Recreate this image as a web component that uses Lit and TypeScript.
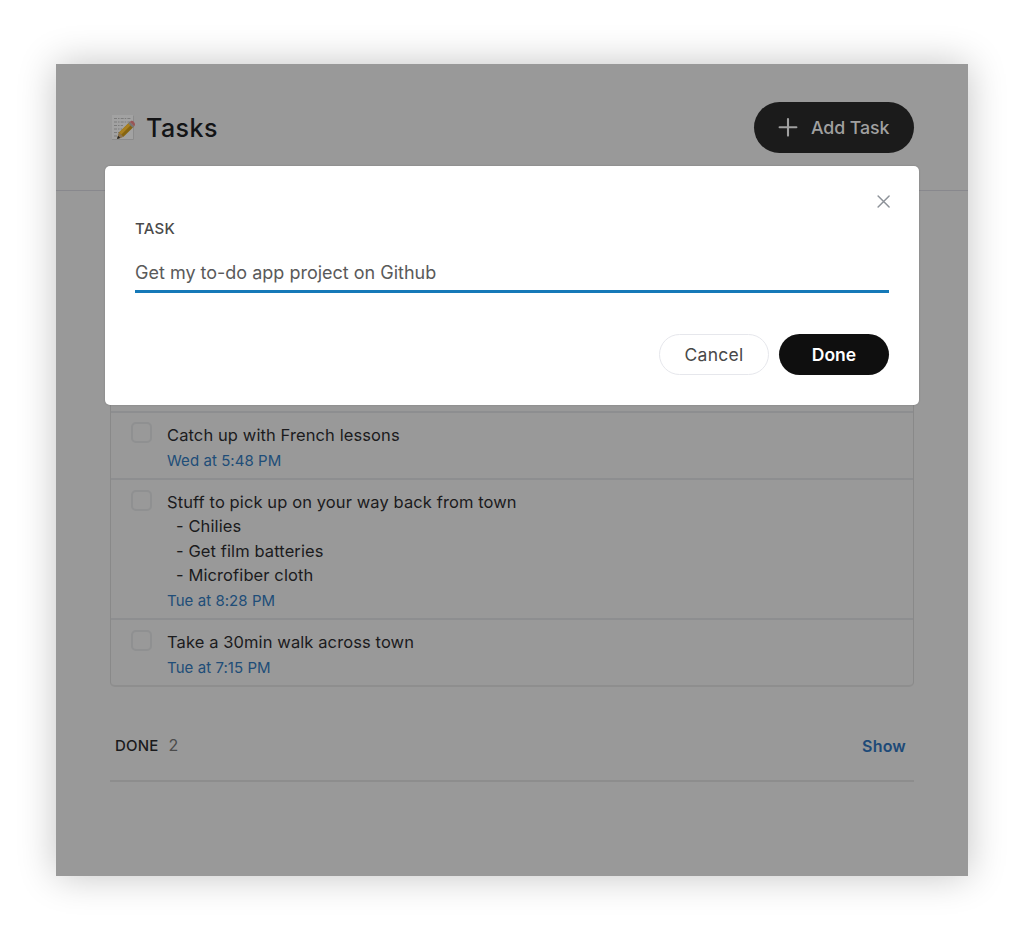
import { LitElement, html, css, svg } from "lit";
import { customElement } from "lit/decorators.js";

interface Task {
  lines: string[];
  time: string;
}

const TASKS: Task[] = [
  { lines: ["Catch up with French lessons"], time: "Wed at 5:48 PM" },
  {
    lines: [
      "Stuff to pick up on your way back from town",
      "- Chilies",
      "- Get film batteries",
      "- Microfiber cloth",
    ],
    time: "Tue at 8:28 PM",
  },
  { lines: ["Take a 30min walk across town"], time: "Tue at 7:15 PM" },
];

const memoIcon = html`<svg class="memo" width="26" height="28" viewBox="0 0 26 28">
  <rect x="2" y="2" width="22" height="25" fill="#a2a2a2" />
  <path d="M23.5 2.5V26.5H2" fill="none" stroke="#8b8b8b" />
  ${[5.5, 9, 12.5, 16, 19.5, 23].map(
    (y, i) => svg`<path d=${`M4 ${y}H${i < 2 ? 21 : 15 - i}`} stroke="#7c7c7c" stroke-width="1.2" stroke-dasharray="3 1 1.5 1.2" />`
  )}
  <path d="M7.2 25.8 9 19.6 19.5 9.2 24 13.4 13.5 23.8Z" fill="#86640f" />
  <path d="M9 19.6 19.5 9.2 21.7 11.3 11.2 21.7Z" fill="#a98020" />
  <path d="M7.2 25.8 9 19.6 13.5 23.8Z" fill="#8d7450" />
  <path d="M7 26 8.1 22.8 10.4 24.9Z" fill="#252525" />
  <path d="M18.2 10.5 19.8 9 24.2 13.2 22.7 14.7Z" fill="#777" />
  <path d="M19.8 9 21.3 7.8Q22.5 7.2 24 8.9 25.4 10.6 25 12L24.2 13.2Z" fill="#985556" />
</svg>`;

@customElement("app-root")
export class AppRoot extends LitElement {
  static styles = css`
    :host {
      display: block;
      box-sizing: border-box;
      width: 1024px;
      height: 940px;
      padding: 64px 56px;
      background: #fff;
      font-family: Inter, sans-serif;
      overflow: hidden;
    }
    * { box-sizing: border-box; }
    button { font: inherit; margin: 0; padding: 0; border: 0; background: none; }
    svg { display: block; flex: none; }
    .window {
      position: relative;
      height: 812px;
      background: #999;
      box-shadow: 0 0 36px rgba(0, 0, 0, 0.24);
    }
    .header {
      display: flex;
      align-items: center;
      justify-content: space-between;
      height: 127px;
      padding: 0 54px;
      border-bottom: 1px solid #88888d;
    }
    .title { display: flex; align-items: center; gap: 10px; }
    .heading { margin: 0; padding-top: 1px; font-size: 25px; line-height: 32px; font-weight: 500; letter-spacing: 0.45px; color: #131416; }
    .add {
      display: flex;
      align-items: center;
      gap: 13px;
      width: 160px;
      height: 51px;
      padding-left: 24px;
      border-radius: 26px;
      background: #1b1b1b;
      color: #a0a0a0;
      font-size: 17.8px;
      font-weight: 550;
      letter-spacing: -0.1px;
    }
    .add-text { padding-top: 1px; }
    .content { padding: 199px 54px 0; }
    .list { padding-top: 20px; border: 1px solid #898989; border-bottom: 2px solid #8e8e8e; border-radius: 5px; }
    .task { display: flex; gap: 15px; padding: 9.9px 20px 6.3px; border-top: 2px solid #8d8e90; }
    .check { width: 21px; height: 21px; margin-top: -0.5px; border: 2px solid #8f9091; border-radius: 5px; }
    .line { font-size: 16.5px; line-height: 24.2px; letter-spacing: 0.1px; color: #1b1b1d; white-space: pre; }
    .sub { padding-left: 9px; }
    .time { margin-top: 1.9px; font-size: 15px; line-height: 23px; letter-spacing: 0.06px; color: #204d78; }
    .done {
      display: flex;
      align-items: center;
      height: 71px;
      margin-top: 23.3px;
      padding: 0 8px 0 5px;
      border-bottom: 2px solid #8d8d8d;
    }
    .done-label { font-size: 15px; font-weight: 500; letter-spacing: 0.2px; color: #1a1a1c; }
    .count { margin-left: 10px; font-size: 16px; color: #4b4b4b; }
    .show { margin-left: auto; padding-top: 2px; font-size: 16px; font-weight: 600; letter-spacing: 0.2px; color: #1d4a78; }
    .modal {
      position: absolute;
      left: 49px;
      top: 102px;
      width: 814px;
      height: 239px;
      padding: 28px 30px;
      border-radius: 5px;
      background: #fff;
      box-shadow: 0 0 2px rgba(0, 0, 0, 0.2);
    }
    .close { display: flex; justify-content: flex-end; height: 15px; }
    .label { display: block; margin-top: 10px; font-size: 15px; line-height: 20px; font-weight: 500; letter-spacing: 0.25px; color: #4a4a4a; }
    .field { margin-top: 17px; height: 37px; border-bottom: 3px solid #1579b8; font-size: 18px; line-height: 34px; color: #5a5a5a; white-space: pre; }
    .actions { display: flex; justify-content: flex-end; gap: 10px; margin-top: 41px; }
    .action { width: 110px; height: 41px; border-radius: 21px; font-size: 17.5px; }
    .cancel { border: 1.5px solid #e6e7ec; letter-spacing: 0.25px; color: #484848; }
    .confirm { background: #0f0f0f; color: #fff; font-weight: 600; }
  `;

  render() {
    return html`
      <div class="window">
        <header class="header">
          <div class="title">${memoIcon}<h1 class="heading">Tasks</h1></div>
          <button class="add">
            <svg width="20" height="20" viewBox="0 0 20 20" fill="none" stroke="#a0a0a0" stroke-width="2.1" stroke-linecap="round">
              <path d="M10 2V18.6M1.6 10.3H18.4" />
            </svg>
            <span class="add-text">Add Task</span>
          </button>
        </header>
        <main class="content">
          <div class="list">
            ${TASKS.map(
              (t) => html`<div class="task">
                <span class="check"></span>
                <div class="body">
                  ${t.lines.map((l, i) => html`<div class="line ${i ? "sub" : ""}">${l}</div>`)}
                  <div class="time">${t.time}</div>
                </div>
              </div>`
            )}
          </div>
          <div class="done">
            <span class="done-label">DONE</span><span class="count">2</span>
            <button class="show">Show</button>
          </div>
        </main>
        <div class="modal" role="dialog">
          <div class="close">
            <svg width="12" height="15" viewBox="0 0 12 15" fill="none" stroke="#8d9299" stroke-width="1.5" stroke-linecap="round" overflow="visible">
              <path d="M1.1 2 12.1 13M12.1 2 1.1 13" />
            </svg>
          </div>
          <span class="label">TASK</span>
          <div class="field">Get my to-do app project on Github</div>
          <div class="actions">
            <button class="action cancel">Cancel</button>
            <button class="action confirm">Done</button>
          </div>
        </div>
      </div>
    `;
  }
}
